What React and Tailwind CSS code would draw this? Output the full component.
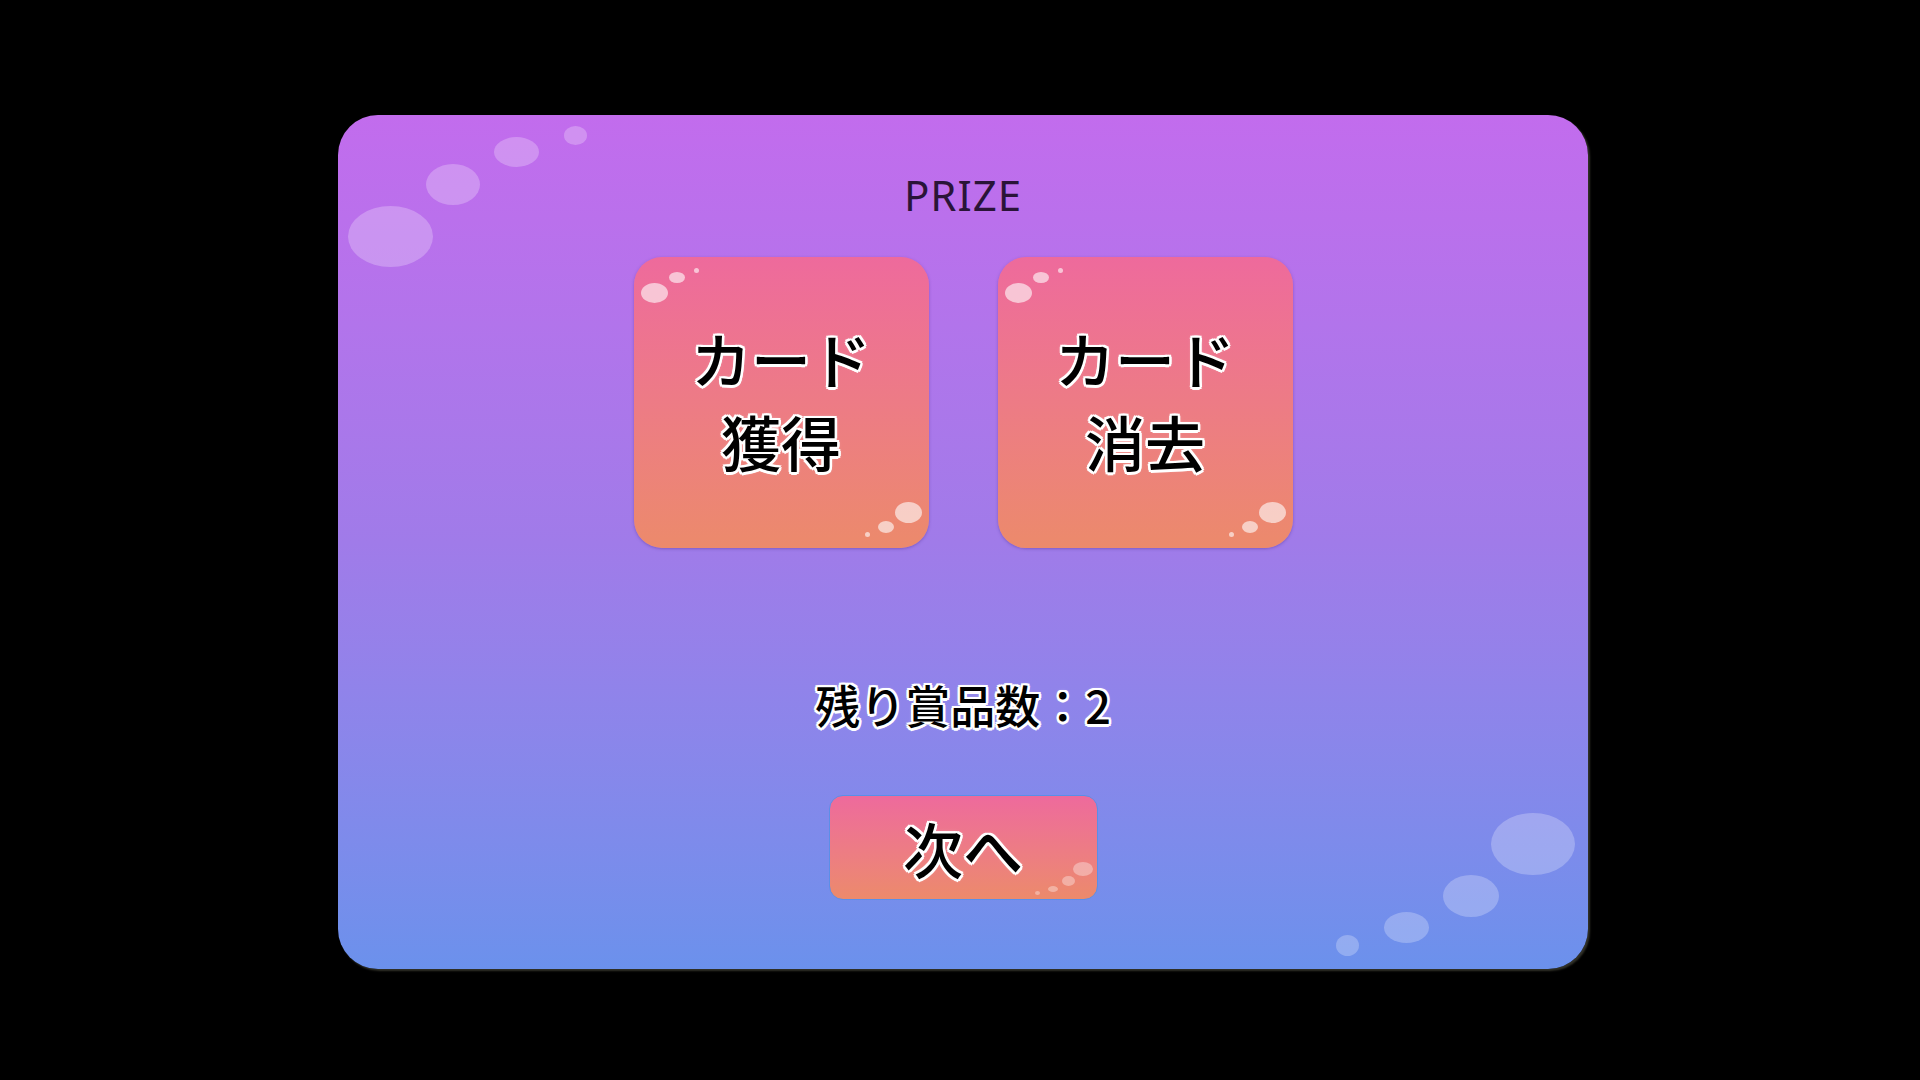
import React from "react";

const outline =
  "[text-shadow:-2.5px_0_0_#fff,2.5px_0_0_#fff,0_-2.5px_0_#fff,0_2.5px_0_#fff,-2px_-2px_0_#fff,2px_-2px_0_#fff,-2px_2px_0_#fff,2px_2px_0_#fff,0_0_4px_rgba(255,255,255,0.7)]";

function Bubble({ className }) {
  return <span className={`absolute rounded-[50%] ${className}`} />;
}

function CardButton({ line1, line2 }) {
  return (
    <div className="relative w-[295px] h-[291px] rounded-[28px] bg-gradient-to-b from-[#ee6a9c] to-[#ec8a6b] shadow-[0_1px_3px_rgba(90,60,160,0.5)] flex flex-col items-center justify-center pb-[8px]">
      <Bubble className="left-[7px] top-[26px] w-[27px] h-[20px] bg-white/60" />
      <Bubble className="left-[35px] top-[15px] w-[16px] h-[11px] bg-white/60" />
      <Bubble className="left-[60px] top-[11px] w-[5px] h-[5px] bg-white/60" />
      <Bubble className="right-[7px] bottom-[25px] w-[27px] h-[21px] bg-white/60" />
      <Bubble className="right-[35px] bottom-[15px] w-[16px] h-[12px] bg-white/60" />
      <Bubble className="right-[59px] bottom-[11px] w-[5px] h-[5px] bg-white/60" />
      <div
        className={`text-[60px] leading-[83px] font-medium text-black text-center font-['Noto_Sans_CJK_JP',sans-serif] ${outline}`}
      >
        <div>{line1}</div>
        <div>{line2}</div>
      </div>
    </div>
  );
}

export default function App() {
  return (
    <div className="w-[1920px] h-[1080px] bg-black pt-[115px] pl-[338px] overflow-hidden">
      <div className="relative w-[1250px] h-[854px] rounded-[40px] bg-gradient-to-b from-[#c26ced] via-[#a07be9] to-[#6b91ec] shadow-[2px_2px_2px_rgba(110,110,90,0.45)] flex flex-col items-center pt-[59px]">
        {/* top-left bubbles */}
        <Bubble className="left-[10px] top-[91px] w-[85px] h-[61px] bg-white/25" />
        <Bubble className="left-[88px] top-[49px] w-[54px] h-[41px] bg-white/25" />
        <Bubble className="left-[156px] top-[22px] w-[45px] h-[30px] bg-white/25" />
        <Bubble className="left-[226px] top-[11px] w-[23px] h-[19px] bg-white/25" />
        {/* bottom-right bubbles */}
        <Bubble className="right-[13px] bottom-[94px] w-[84px] h-[62px] bg-white/25" />
        <Bubble className="right-[89px] bottom-[52px] w-[56px] h-[42px] bg-white/25" />
        <Bubble className="right-[159px] bottom-[26px] w-[45px] h-[31px] bg-white/25" />
        <Bubble className="right-[229px] bottom-[13px] w-[23px] h-[21px] bg-white/25" />

        <div className="text-[42px] leading-[42px] tracking-[1px] text-[#2a1438] font-['Noto_Sans','Open_Sans',sans-serif]">
          PRIZE
        </div>

        <div className="mt-[41px] flex gap-[69px]">
          <CardButton line1="カード" line2="獲得" />
          <CardButton line1="カード" line2="消去" />
        </div>

        <div
          className={`mt-[134px] text-[45px] leading-[45px] font-medium text-black font-['Noto_Sans_CJK_JP',sans-serif] ${outline}`}
        >
          残り賞品数：2
        </div>

        <div className="relative mt-[68px] w-[269px] h-[105px] rounded-[14px] border border-[#5a8fe8] bg-gradient-to-b from-[#ee6a9c] to-[#ec8a6b] flex items-center justify-center">
          <Bubble className="right-[4px] bottom-[23px] w-[20px] h-[14px] bg-white/35" />
          <Bubble className="right-[22px] bottom-[13px] w-[13px] h-[10px] bg-white/35" />
          <Bubble className="right-[39px] bottom-[7px] w-[10px] h-[6px] bg-white/35" />
          <Bubble className="right-[57px] bottom-[4px] w-[5px] h-[4px] bg-white/35" />
          <span
            className={`text-[60px] leading-[60px] font-medium text-black font-['Noto_Sans_CJK_JP',sans-serif] ${outline}`}
          >
            次へ
          </span>
        </div>
      </div>
    </div>
  );
}
